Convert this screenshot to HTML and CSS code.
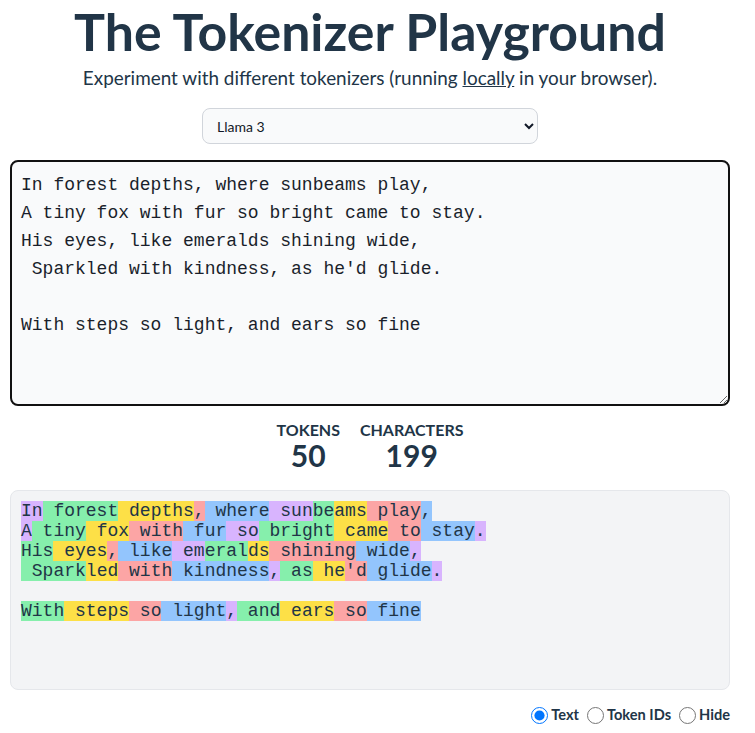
FILE: index.html
```html
<!DOCTYPE html>
<html lang="en">
<head>
<meta charset="utf-8">
<title>The Tokenizer Playground</title>
<link rel="stylesheet" href="styles.css">
</head>
<body>
<div class="app">
  <h1 class="title">The Tokenizer Playground</h1>
  <p class="subtitle">Experiment with different tokenizers (running <a class="link" href="#">locally</a> in your browser).</p>
  <div class="select-row">
    <select class="model">
      <option>Llama 3</option>
    </select>
  </div>
  <textarea class="input" id="input" spellcheck="false">In forest depths, where sunbeams play,
A tiny fox with fur so bright came to stay.
His eyes, like emeralds shining wide,
 Sparkled with kindness, as he'd glide.

With steps so light, and ears so fine</textarea>
  <div class="stats">
    <div class="stat">
      <div class="stat-label">Tokens</div>
      <div class="stat-value">50</div>
    </div>
    <div class="stat">
      <div class="stat-label">Characters</div>
      <div class="stat-value">199</div>
    </div>
  </div>
  <div class="output"><span class="t1">In</span><span class="t2"> forest</span><span class="t3"> depths</span><span class="t4">,</span><span class="t5"> where</span><span class="t1"> sun</span><span class="t2">be</span><span class="t3">ams</span><span class="t4"> play</span><span class="t5">,
</span><span class="t1">A</span><span class="t2"> tiny</span><span class="t3"> fox</span><span class="t4"> with</span><span class="t5"> fur</span><span class="t1"> so</span><span class="t2"> bright</span><span class="t3"> came</span><span class="t4"> to</span><span class="t5"> stay</span><span class="t1">.
</span><span class="t2">His</span><span class="t3"> eyes</span><span class="t4">,</span><span class="t5"> like</span><span class="t1"> em</span><span class="t2">eral</span><span class="t3">ds</span><span class="t4"> shining</span><span class="t5"> wide</span><span class="t1">,
</span><span class="t2"> Spark</span><span class="t3">led</span><span class="t4"> with</span><span class="t5"> kindness</span><span class="t1">,</span><span class="t2"> as</span><span class="t3"> he</span><span class="t4">'d</span><span class="t5"> glide</span><span class="t1">.

</span><span class="t2">With</span><span class="t3"> steps</span><span class="t4"> so</span><span class="t5"> light</span><span class="t1">,</span><span class="t2"> and</span><span class="t3"> ears</span><span class="t4"> so</span><span class="t5"> fine</span></div>
  <div class="modes">
    <label class="mode"><input class="radio" type="radio" name="mode" checked><span>Text</span></label>
    <label class="mode"><input class="radio" type="radio" name="mode"><span>Token IDs</span></label>
    <label class="mode"><input class="radio" type="radio" name="mode"><span>Hide</span></label>
  </div>
</div>
<script src="script.js"></script>
</body>
</html>
```

FILE: styles.css
```css
* {
  box-sizing: border-box;
}

html, body {
  margin: 0;
  background: #ffffff;
}

body {
  font-family: Lato, "Noto Sans", sans-serif;
  color: #213547;
}

.app {
  width: 740px;
  padding: 3px 10px 0 10px;
  display: flex;
  flex-direction: column;
  align-items: stretch;
}

.title {
  margin: 0;
  font-size: 51.8px;
  line-height: 56px;
  font-weight: 700;
  text-align: center;
  color: #213547;
}

.subtitle {
  margin: 5px 0 16px 0;
  font-size: 18.9px;
  line-height: 28px;
  text-align: center;
}

.link {
  color: inherit;
  text-decoration: underline;
}

.select-row {
  display: flex;
  justify-content: center;
}

.model {
  width: 336px;
  height: 36px;
  padding: 0 10px;
  font-family: inherit;
  font-size: 14px;
  color: #111827;
  background: #f9fafb;
  border: 1px solid #d1d5db;
  border-radius: 8px;
}

.input {
  display: block;
  margin-top: 16px;
  width: 100%;
  height: 246px;
  padding: 9px 10px 10px 9px;
  font-family: "Liberation Mono", monospace;
  font-size: 18px;
  line-height: 28px;
  color: #1a1f2b;
  caret-color: #111111;
  background: #f9fafb;
  border: 2px solid #111111;
  border-radius: 8px;
  resize: vertical;
  outline: none;
}

.stats {
  display: flex;
  justify-content: center;
  gap: 20px;
  margin-top: 14px;
}

.stat {
  display: flex;
  flex-direction: column;
  align-items: center;
}

.stat-label {
  font-size: 16px;
  line-height: 20px;
  font-weight: 700;
  text-transform: uppercase;
}

.stat-value {
  font-size: 30px;
  line-height: 30px;
  font-weight: 700;
}

.output {
  margin-top: 20px;
  height: 200px;
  padding: 10px;
  font-family: "Liberation Mono", monospace;
  font-size: 18px;
  line-height: 20px;
  white-space: pre-wrap;
  color: #213547;
  background: #f3f4f6;
  border: 1px solid #e5e7eb;
  border-radius: 8px;
}

.t1 { background: #d8b4fe; }
.t2 { background: #86efac; }
.t3 { background: #fde047; }
.t4 { background: #fca5a5; }
.t5 { background: #93c5fd; }

.modes {
  display: flex;
  justify-content: flex-end;
  gap: 8px;
  margin-top: 13px;
  font-size: 14.6px;
  line-height: 24px;
  font-weight: 700;
}

.mode {
  display: flex;
  align-items: center;
  gap: 3px;
}

.radio {
  width: 17px;
  height: 17px;
  margin: 0;
}
```

FILE: script.js
```js
const input = document.getElementById('input');
input.focus();
input.setSelectionRange(input.value.length, input.value.length);
```
